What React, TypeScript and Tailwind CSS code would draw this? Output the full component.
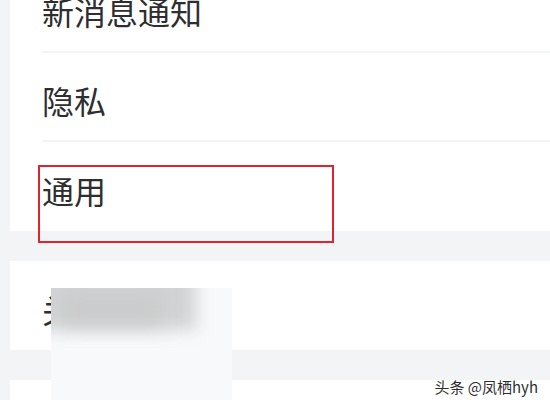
import React from "react";

const font = { fontFamily: '"Noto Sans CJK SC", "Noto Sans", sans-serif' };

function Row({ label, divider }: { label: string; divider?: boolean }) {
  return (
    <div className={`h-[89px] flex items-center pt-[6px] ml-[32px] ${divider ? "border-b-2 border-[#f3f4f5]" : ""}`}>
      <span className="text-[32px] leading-none text-[#2e2e30]">{label}</span>
    </div>
  );
}

export default function App() {
  return (
    <div className="relative w-[550px] h-[400px] overflow-hidden bg-[#f3f4f6]" style={font}>
      <div className="ml-[10px] -mt-[36px] flex flex-col gap-[30px]">
        <div className="bg-white flex flex-col">
          <Row label="新消息通知" divider />
          <Row label="隐私" divider />
          <Row label="通用" />
        </div>
        <div className="bg-white flex flex-col">
          <Row label="关于微信" />
        </div>
        <div className="bg-white h-[40px]" />
      </div>

      {/* highlight box */}
      <div className="absolute left-[38px] top-[165px] w-[296px] h-[78px] border-2 border-[#e0242f]" />

      {/* blurred mosaic */}
      <div className="absolute left-[51px] top-[288px] w-[181px] h-[112px] overflow-hidden bg-[#f8f9fa]">
        <div className="absolute -left-[20px] -top-[20px] w-[165px] h-[62px] bg-[#d2d3d4] blur-[8px]" />
        <div className="absolute left-[10px] top-[6px] w-[100px] h-[30px] bg-[#cacbcc] blur-[10px]" />
      </div>

      {/* watermark */}
      <div className="absolute right-[12px] bottom-[6px] text-[15px] leading-none text-[#2f2f2f]">
        头条 @凤栖hyh
      </div>
    </div>
  );
}
